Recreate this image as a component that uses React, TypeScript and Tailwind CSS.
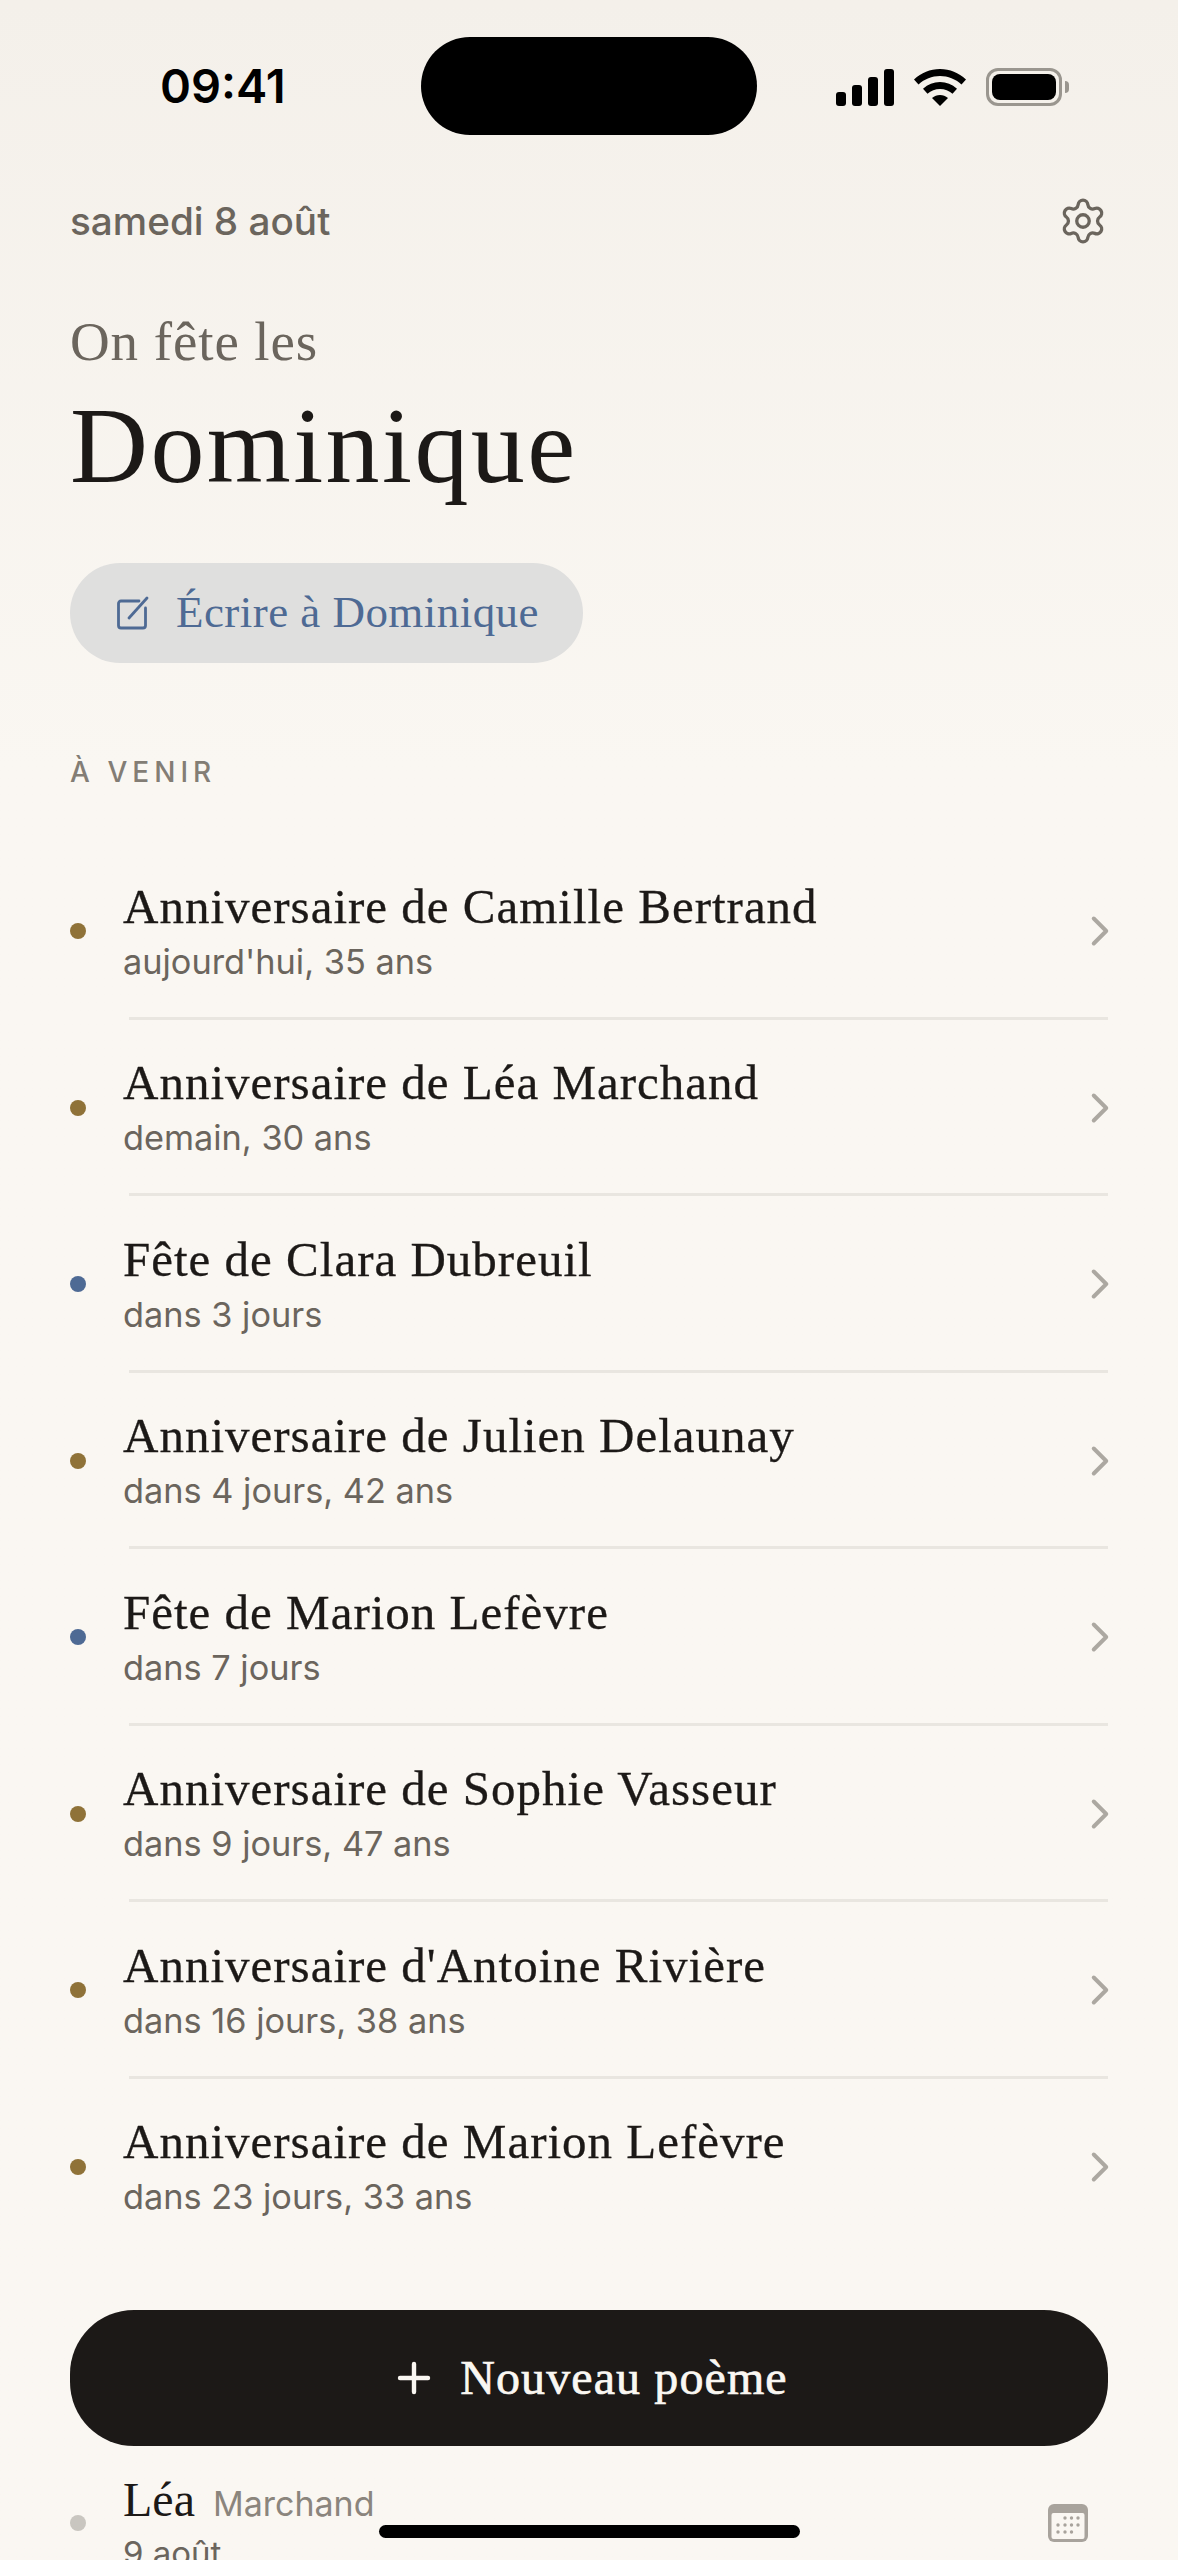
import { ChevronRight, Plus, Settings } from "lucide-react";

const serif = "font-['Liberation_Serif',serif]";
const sans = "font-['Inter',sans-serif]";

const events = [
  { title: "Anniversaire de Camille Bertrand", sub: "aujourd'hui, 35 ans", dot: "bg-[#8f7238]" },
  { title: "Anniversaire de Léa Marchand", sub: "demain, 30 ans", dot: "bg-[#8f7238]" },
  { title: "Fête de Clara Dubreuil", sub: "dans 3 jours", dot: "bg-[#4e6a94]" },
  { title: "Anniversaire de Julien Delaunay", sub: "dans 4 jours, 42 ans", dot: "bg-[#8f7238]" },
  { title: "Fête de Marion Lefèvre", sub: "dans 7 jours", dot: "bg-[#4e6a94]" },
  { title: "Anniversaire de Sophie Vasseur", sub: "dans 9 jours, 47 ans", dot: "bg-[#8f7238]" },
  { title: "Anniversaire d'Antoine Rivière", sub: "dans 16 jours, 38 ans", dot: "bg-[#8f7238]" },
  { title: "Anniversaire de Marion Lefèvre", sub: "dans 23 jours, 33 ans", dot: "bg-[#8f7238]" },
];

const StatusIcons = () => (
  <div className="flex items-center gap-[20px]">
    <svg width="58" height="37" viewBox="0 0 58 37" fill="#000">
      <rect x="0" y="23" width="10" height="14" rx="3" />
      <rect x="16" y="16" width="10" height="21" rx="3" />
      <rect x="32" y="8" width="10" height="29" rx="3" />
      <rect x="48" y="0" width="10" height="37" rx="3" />
    </svg>
    <svg width="52" height="37" viewBox="0 0 52 37" fill="#000">
      <path d="M26 0C16 0 7.500 3.800 0 10.500L4.500 15.500C10.500 10 18 7 26 7S41.500 10 47.500 15.500L52 10.500C44.500 3.800 36 0 26 0Z" />
      <path d="M26 13C19.500 13 14 15.300 9 19.700L13.500 24.700C17 21.600 21.300 20 26 20S35 21.600 38.500 24.700L43 19.700C38 15.300 32.500 13 26 13Z" />
      <path d="M26 26C23 26 20.500 27 18 29L26 37L34 29C31.500 27 29 26 26 26Z" />
    </svg>
    <div className="flex items-center gap-[3px]">
      <div className="flex h-[38px] w-[76px] items-center justify-center rounded-[12px] border-[3px] border-[#9a968f]">
        <div className="h-[26px] w-[64px] rounded-[8px] bg-black" />
      </div>
      <div className="h-[12px] w-[4px] rounded-r-full bg-[#9a968f]" />
    </div>
  </div>
);

const EventRow = ({ title, sub, dot, last }: { title: string; sub: string; dot: string; last: boolean }) => (
  <div className="relative flex h-[176.500px] items-center">
    <div className={`ml-[-1px] h-[16px] w-[16px] shrink-0 rounded-full ${dot}`} />
    <div className="ml-[37px] flex-1">
      <div className={`${serif} text-[49px] leading-[56px] tracking-[1px] text-[#1c1917] [-webkit-text-stroke:0.3px_#1c1917]`}>{title}</div>
      <div className={`${sans} mt-[5px] text-[34.300px] leading-[44px] text-[#6b655d]`}>{sub}</div>
    </div>
    <ChevronRight size={50} strokeWidth={1.9} className="mr-[-17px] text-[#aca8a1]" />
    {!last && <div className="absolute right-0 bottom-0 left-[58px] h-[3px] bg-[#e9e6e0]" />}
  </div>
);

export default function App() {
  return (
    <div className="relative h-[2560px] w-[1178px] overflow-hidden bg-gradient-to-b from-[#f4f0ea] from-0% to-[#faf7f2] to-30%">
      <div className="relative h-[196px]">
        <div className={`${sans} absolute top-[58px] left-[160px] text-[47px] leading-[56px] font-semibold text-black`}>09:41</div>
        <div className="absolute top-[37px] left-[421px] h-[98px] w-[336px] rounded-[49px] bg-black" />
        <div className="absolute top-[68px] left-[836px]">
          <StatusIcons />
        </div>
      </div>

      <div className="px-[70px]">
        <div className="flex items-center justify-between">
          <div className={`${sans} text-[38.700px] leading-[46px] font-medium text-[#6b655d]`}>samedi 8 août</div>
          <Settings size={50} strokeWidth={1.6} className="text-[#6b655d]" />
        </div>

        <div className={`${serif} mt-[62px] text-[55px] leading-[68px] tracking-[0.9px] text-[#6b655d]`}>On fête les</div>
        <div className={`${serif} mt-[10px] text-[108px] leading-[120px] tracking-[2.4px] text-[#1c1917]`}>Dominique</div>

        <div className="mt-[57px] flex h-[100px] w-[513px] items-center rounded-[50px] bg-[#dfdfde] pl-[46px]">
          <svg width="36" height="36" viewBox="0 0 36 36" fill="none" stroke="#4e6a94" strokeWidth="2.800" strokeLinecap="round" strokeLinejoin="round">
            <path d="M23 6H5a2.500 2.500 0 0 0-2.500 2.500v22A2.500 2.500 0 0 0 5 33h22a2.500 2.500 0 0 0 2.500-2.500V13" />
            <path d="M13 23L31 3" />
          </svg>
          <span className={`${serif} ml-[24px] text-[45px] tracking-[0.45px] text-[#4e6a94]`}>Écrire à Dominique</span>
        </div>

        <div className={`${sans} mt-[92px] text-[28px] leading-[34px] font-medium tracking-[0.18em] text-[#837d75]`}>À VENIR</div>

        <div className="mt-[54px] ml-[1px]">
          {events.map((e, i) => (
            <EventRow key={e.title} title={e.title} sub={e.sub} dot={e.dot} last={i === events.length - 1} />
          ))}
        </div>

        <div className="mt-[55px] flex h-[136px] items-center justify-center rounded-[64px] bg-[#1c1917]">
          <Plus size={48} strokeWidth={2.2} className="text-[#faf7f2]" />
          <span className={`${serif} ml-[22px] text-[48px] tracking-[1.1px] text-[#faf7f2] [-webkit-text-stroke:0.7px_#faf7f2]`}>Nouveau poème</span>
        </div>

        <div className="mt-[24px] flex items-center">
          <div className="h-[16px] w-[16px] shrink-0 rounded-full bg-[#c9c6c0]" />
          <div className="ml-[37px] flex-1">
            <div className="flex items-baseline gap-[18px]">
              <span className={`${serif} text-[48px] leading-[60px] text-[#1c1917]`}>Léa</span>
              <span className={`${sans} text-[34px] text-[#8b857d]`}>Marchand</span>
            </div>
            <div className={`${sans} text-[33px] leading-[46px] text-[#6b655d]`}>9 août</div>
          </div>
          <svg width="40" height="38" viewBox="0 0 40 38" className="mr-[20px]">
            <rect x="0" y="0" width="40" height="38" rx="6" fill="#a8a39c" />
            <rect x="3.500" y="9" width="33" height="26" rx="2" fill="#faf7f2" />
            {[[17, 14], [23.500, 14], [30, 14], [10, 21], [17, 21], [23.500, 21], [30, 21], [10, 28], [17, 28], [23.500, 28]].map(([x, y]) => (
              <circle key={`${x}-${y}`} cx={x} cy={y} r="1.700" fill="#a8a39c" />
            ))}
          </svg>
        </div>
      </div>

      <div className="absolute top-[2525px] left-[379px] h-[13px] w-[421px] rounded-full bg-black" />
    </div>
  );
}
